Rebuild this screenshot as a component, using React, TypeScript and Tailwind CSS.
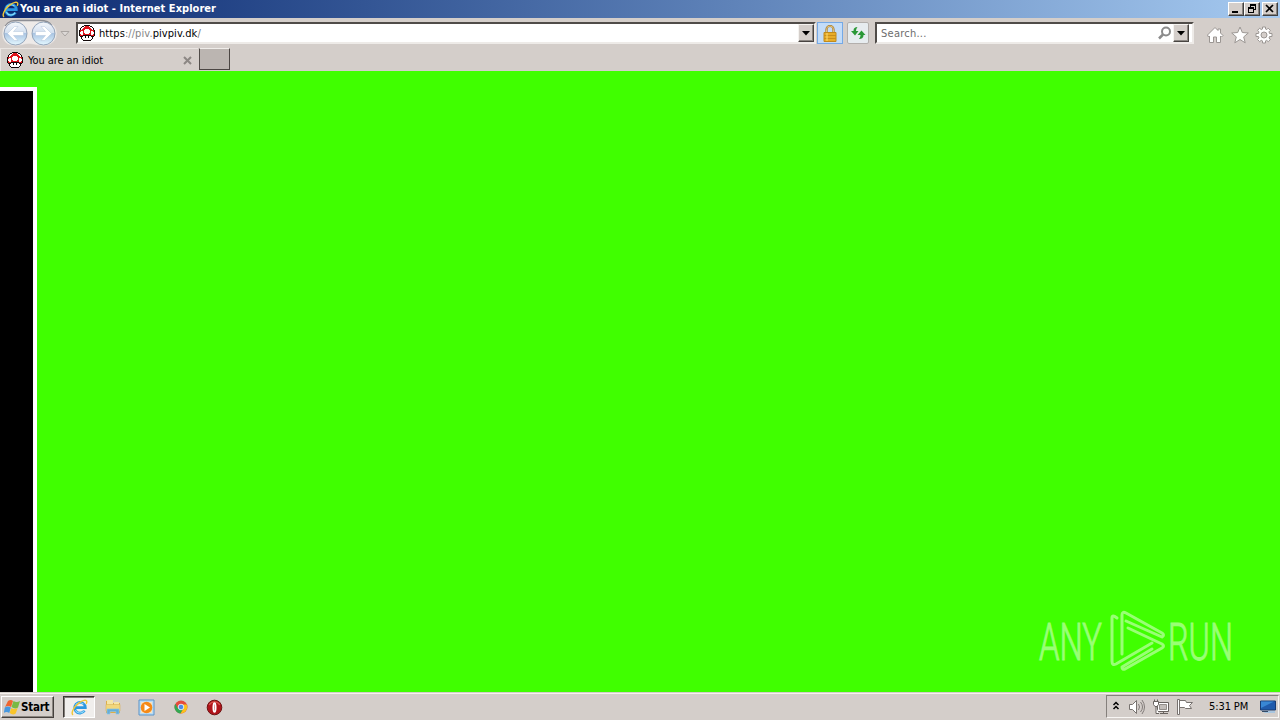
import React from "react";

interface IconProps {
  className?: string;
}

const MUSHROOM = [
  ".....kkkkkk.....",
  "...kkwrrrrwkk...",
  "..kwwrrrrrrwwk..",
  ".kwwrrrrrrrrwwk.",
  ".kwrrrwwwwrrrwk.",
  "krrrrwwwwwwrrrrk",
  "krwwrwwwwwwrwwrk",
  "kwwwrwwwwwwrwwwk",
  "kwwwrrwwwwrrwwwk",
  "krwwrrrrrrrrwwrk",
  "krrrkkkkkkkkrrrk",
  ".kkkwwkwwkwwkkk.",
  "..kwwwkwwkwwwk..",
  "..kwwwwwwwwwwk..",
  "...kwwwwwwwwk...",
  "....kkkkkkkk....",
];

const PIXEL_COLORS: Record<string, string> = {
  k: "#120808",
  r: "#e0141c",
  w: "#ffffff",
};

const MushroomIcon = () => (
  <svg width="16" height="16" viewBox="0 0 16 16" shapeRendering="crispEdges" className="shrink-0">
    {MUSHROOM.map((row, y) =>
      row.split("").map((c, x) =>
        c === "." ? null : (
          <rect key={`${x}-${y}`} x={x} y={y} width="1" height="1" fill={PIXEL_COLORS[c]} />
        )
      )
    )}
  </svg>
);

const ExplorerIcon = ({ className }: IconProps) => (
  <svg viewBox="0 0 18 18" className={className}>
    <path
      d="M14.300 12.300a5.700 5.700 0 1 1 .900-3.200H5"
      fill="none"
      stroke="#2a97e0"
      strokeWidth="2.800"
    />
    <path d="M13.900 12.300a5.300 5.300 0 0 1-9.300-.3M4.600 6.900a5.400 5.400 0 0 1 8.500-1.500" fill="none" stroke="#8edcfa" strokeWidth="1.100" />
    <path
      d="M2.200 16.800C-.5 15 3 8.200 8.200 4.300c4-3 8.200-4 8.500-1.500.1.800-.3 1.700-.7 2.400"
      fill="none"
      stroke="#efc638"
      strokeWidth="1.500"
    />
  </svg>
);

const NavArrows = () => (
  <svg width="60" height="29" viewBox="0 0 60 29" className="shrink-0">
    <defs>
      <linearGradient id="glass" x1="0" y1="0" x2="0" y2="1">
        <stop offset="0" stopColor="#f4f7fb" />
        <stop offset=".47" stopColor="#d3e0f0" />
        <stop offset=".5" stopColor="#a9c4e2" />
        <stop offset="1" stopColor="#e4f8ff" />
      </linearGradient>
    </defs>
    <path
      d="M2 14.500C2 6 8 1.500 15 1.500h28c8 0 14 6 14 13s-6 12.500-14 12.500c-6 0-9-2-14-2s-8 2-14 2C7 27 2 22 2 14.500"
      fill="#eeeae8"
      stroke="#d5d0cd"
      strokeWidth=".7"
    />
    <path d="M5 7C9 1 14 1.500 19 1.500h21c6 0 10 2 12 5" fill="none" stroke="#8d8e94" strokeWidth="1.300" />
    {[15.5, 43.5].map((cx) => (
      <circle key={cx} cx={cx} cy="14.500" r="11.500" fill="url(#glass)" stroke="#93a4ba" />
    ))}
    <g fill="#fff" stroke="#b3c4da" strokeWidth=".5">
      <path d="M7.500 14.500l7-7h3.500l-4.500 5h10v4h-10l4.500 5h-3.500z" />
      <path d="M51.500 14.500l-7-7H41l4.500 5h-10v4h10l-4.500 5h3.500z" />
    </g>
  </svg>
);

const DropButton = () => (
  <div className="flex h-[18px] w-4 shrink-0 items-center justify-center border border-t-[#f5f3f0] border-r-[#484441] border-b-[#484441] border-l-[#f5f3f0] bg-[#d4ceca] shadow-[inset_-1px_-1px_#8c8783]">
    <svg width="8" height="5" viewBox="0 0 8 5">
      <path d="M0 0h8L4 4.500z" fill="#000" />
    </svg>
  </div>
);

const TitleBar = () => (
  <div className="flex h-[18px] items-center bg-linear-to-r from-[#0c2870] to-[#a6caf0] pl-[2px] pr-[2px]">
    <ExplorerIcon className="h-[17px] w-[17px]" />
    <span className="ml-px w-[200px] whitespace-nowrap pt-px font-['DejaVu_Sans_Condensed','DejaVu_Sans',sans-serif] text-[11px] font-bold tracking-[0.04px] text-white">
      You are an idiot - Internet Explorer
    </span>
    <div className="ml-auto flex">
      {["min", "restore", "close"].map((name) => (
        <div
          key={name}
          className={`h-[14px] w-4 border border-t-white border-r-[#404040] border-b-[#404040] border-l-white bg-[#d4ceca] shadow-[inset_-1px_-1px_#87827e] ${
            name === "close" ? "ml-[2px]" : ""
          }`}
        >
          <svg width="14" height="12" viewBox="0 0 14 12" fill="none" stroke="#000" shapeRendering="crispEdges">
            {name === "min" && <path d="M3 9h6" strokeWidth="2" />}
            {name === "restore" && (
              <>
                <path d="M5.500 4V1.500h5v5H9M3.500 4.500h5v5h-5z" />
                <path d="M5 2h6M3 5h6" strokeWidth="2" />
              </>
            )}
            {name === "close" && (
              <path d="M3 2l7 7M10 2L3 9" strokeWidth="1.700" shapeRendering="auto" />
            )}
          </svg>
        </div>
      ))}
    </div>
  </div>
);

const NavBar = () => (
  <div className="flex h-[30px] items-start pt-[1px] font-['DejaVu_Sans_Condensed','DejaVu_Sans',sans-serif] text-[11px]">
    <NavArrows />
    <svg width="10" height="6" viewBox="0 0 10 6" className="mt-3 shrink-0">
      <path d="M1 .500h8L5 5z" fill="#ddd9d7" stroke="#aaa5a2" />
    </svg>
    <div className="ml-[6px] mt-[3px] flex h-[22px] w-[740px] shrink-0 items-center border-2 border-t-[#504c49] border-r-[#eeebe8] border-b-[#eeebe8] border-l-[#504c49] bg-white pl-px">
      <MushroomIcon />
      <span className="ml-1 whitespace-nowrap pt-[2px] tracking-[0.08px] text-black">
        https<span className="text-[#858585]">://piv.</span>pivpiv.dk<span className="text-[#777]">/</span>
      </span>
      <div className="ml-auto">
        <DropButton />
      </div>
    </div>
    <div className="ml-px mt-[3px] flex h-[22px] w-[26px] shrink-0 items-center justify-center border border-[#75a9e6] bg-[#c3dcf8]">
      <svg width="14" height="17" viewBox="0 0 14 17">
        <path d="M3.500 8V4.500a3.500 3.500 0 0 1 7 0V8" fill="none" stroke="#a57a2c" strokeWidth="2.200" />
        <path d="M3.500 8V4.500a3.500 3.500 0 0 1 7 0V8" fill="none" stroke="#f0d491" strokeWidth=".8" />
        <path d="M1 7.500h12v9H1z" fill="#e8ad2a" stroke="#c08a1c" />
        <path d="M1 10.500h12M1 13.500h12" stroke="#c98f1d" />
        <path d="M4 8v8" stroke="#ffdc70" />
      </svg>
    </div>
    <div className="ml-[4px] mt-[3px] flex h-[22px] w-[22px] shrink-0 items-center justify-center rounded-[2px] border border-[#b3afac] bg-[#e7ecef]">
      <svg width="16" height="16" viewBox="0 0 16 16" fill="#2b9837">
        <path d="M7.500 2C5 2 3.500 3 3.500 6H1l4 4.500L8.500 6H6c0-1.500.5-2.500 1.500-4z" />
        <path d="M9 14c2.500 0 4.500-1 4.500-4H15.500l-4-4.500L7.500 10H10.500c0 1.500-.5 2.500-1.500 4z" />
      </svg>
    </div>
    <div className="ml-[6px] mt-[3px] flex h-[22px] w-[319px] shrink-0 items-center border-2 border-t-[#504c49] border-r-[#eeebe8] border-b-[#eeebe8] border-l-[#504c49] bg-white pl-[4px] pr-[3px]">
      <span className="pt-[2px] tracking-[0.25px] text-[#6d6d6d]">Search...</span>
      <svg width="15" height="15" viewBox="0 0 15 15" className="ml-auto mr-px" fill="none" stroke="#8b8b8b" strokeWidth="2">
        <circle cx="9" cy="5.500" r="4" />
        <path d="M6 8.500L2 12.500" strokeWidth="2.500" />
      </svg>
      <DropButton />
    </div>
    <div className="ml-[12px] mt-[7px] flex gap-[6.5px]">
      <svg width="18" height="18" viewBox="0 0 18 18" fill="#fff" stroke="#9b9693">
        <path d="M1.500 9L9 1.500 12 4.500V3h2.500v4l2.500 2.500-1.500 1.500-1-1v6.500h-4V11h-3v5.500h-4V10l-1 1z" />
      </svg>
      <svg width="18" height="18" viewBox="0 0 18 18" fill="#fff" stroke="#9b9693">
        <path d="M9 1l2.300 5.500 6 .5-4.600 3.900 1.500 5.900L9 13.500l-5.200 3.300 1.500-5.900L.7 7l6-.5z" />
      </svg>
      <svg width="18" height="18" viewBox="0 0 18 18" fill="#fff" stroke="#9b9693">
        <path
          fillRule="evenodd"
          d="M7.500 1h3v2l1.300.6 1.400-1.400 2.200 2.200-1.400 1.400.5 1.700H17v3h-2.500l-.5 1.500 1.400 1.500-2.200 2.200-1.500-1.400-1.200.6V17h-3v-2.100l-1.300-.6-1.500 1.400-2.200-2.200L4 12l-.5-1.500H1v-3h2.500L4 5.800 2.500 4.400l2.200-2.200 1.500 1.400L7.500 3zM9 6a3 3 0 1 0 0 6 3 3 0 0 0 0-6z"
        />
      </svg>
    </div>
  </div>
);

const TabBar = () => (
  <div className="flex h-[23px]">
    <div className="flex h-[23px] w-[198px] items-center border-t border-l border-[#e9e5e2] pl-[6px] pr-[6px]">
      <MushroomIcon />
      <span className="ml-[5px] whitespace-nowrap pt-[2px] font-['DejaVu_Sans_Condensed','DejaVu_Sans',sans-serif] text-[11px] tracking-[-0.08px] text-black">
        You are an idiot
      </span>
      <svg width="9" height="9" viewBox="0 0 9 9" className="ml-auto">
        <path d="M1 1l7 7M8 1L1 8" stroke="#8c8784" strokeWidth="2" />
      </svg>
    </div>
    <div className="ml-px h-[22px] w-[31px] border-t border-r border-b border-l border-t-[#f0edea] border-r-[#4b4643] border-b-[#4b4643] border-l-[#504b48] bg-[#bbb5b1]" />
  </div>
);

const Watermark = () => (
  <svg width="200" height="62" viewBox="0 0 200 62" className="absolute right-[42px] bottom-[20px] opacity-60">
    <g className="font-['Roboto',sans-serif] text-[51px] font-light" fill="#d5ffc3" stroke="#d5ffc3" strokeWidth="1">
      <text x="1" y="50" textLength="63" lengthAdjust="spacingAndGlyphs">
        ANY
      </text>
      <text x="130" y="50" textLength="65" lengthAdjust="spacingAndGlyphs">
        RUN
      </text>
    </g>
    <g fill="none" stroke="#d5ffc3" strokeWidth="3" strokeLinejoin="round" strokeLinecap="round">
      <path d="M79 8q-5-4-5 0v43q0 5 4 3l36-21" />
      <path d="M84 44V5q0-4 4-2l36 20q3 2 0 4L88 11" />
      <path d="M90 18l34 16q3 2 0 4L87 59q-3 1-3-2l30-18" />
    </g>
  </svg>
);

const WebPage = () => (
  <main className="relative flex h-[621px] items-end overflow-hidden bg-[#40ff00]">
    <div className="h-[605px] w-[37px] border-t-4 border-r-4 border-white bg-black" />
    <Watermark />
  </main>
);

const FolderIcon = () => (
  <svg width="18" height="18" viewBox="0 0 18 18">
    <path d="M2 3h5l1 2h8v10H2z" fill="#dcae48" />
    <path d="M3 2h6v5H3zM10 4h5v6h-5z" fill="#f5e5a5" />
    <path d="M2 6.500h14V13H2z" fill="#f2d77c" stroke="#d9b457" strokeWidth=".6" />
    <path d="M3 16v-5h12v5h-3v-2.500H6V16z" fill="#65add7" stroke="#8cc4e4" strokeWidth=".7" />
  </svg>
);

const MediaIcon = () => (
  <svg width="17" height="17" viewBox="0 0 17 17">
    <path d="M1 1h15v15H1z" fill="#b9dcf4" stroke="#5b93c8" />
    <path d="M3 3h11v11H3z" fill="#f8e3c0" />
    <circle cx="8.500" cy="8.500" r="5.800" fill="#f58a18" />
    <path d="M6.500 5l5.500 3.500L6.500 12z" fill="#fff" />
  </svg>
);

const ChromeIcon = () => (
  <svg width="14" height="14" viewBox="0 0 14 14">
    <circle cx="7" cy="7" r="6.500" fill="#e54b3d" />
    <path d="M1.300 3.800A6.500 6.500 0 0 0 6.500 13.500L9.500 8.500 7 7 4 8.500z" fill="#32a853" />
    <path d="M6.500 13.500a6.500 6.500 0 0 0 6.200-9H7l2.600 4z" fill="#fbc21b" />
    <circle cx="7" cy="7" r="2.800" fill="#4c8be8" stroke="#fff" strokeWidth=".8" />
  </svg>
);

const OperaIcon = () => (
  <svg width="17" height="17" viewBox="0 0 17 17">
    <circle cx="8.500" cy="8.500" r="7.300" fill="#b0141a" stroke="#6c1212" />
    <path d="M3.200 6a6 6 0 0 1 10.600 0" fill="none" stroke="#d9534c" strokeWidth="1.300" />
    <ellipse cx="8.500" cy="8.500" rx="2" ry="5.300" fill="#fff" />
    <ellipse cx="8.500" cy="8.500" rx=".4" ry="3.500" fill="#d98080" />
  </svg>
);

const Tray = () => (
  <div className="ml-auto flex h-[23px] w-[173px] items-center border border-t-[#85807c] border-r-[#f8f6f4] border-b-[#f8f6f4] border-l-[#85807c] pl-[5px]">
    <svg width="8" height="10" viewBox="0 0 8 10" className="-mt-[2px] shrink-0" fill="none" stroke="#000" strokeWidth="1.500">
      <path d="M1.500 4L4 1.500 6.500 4M1.500 8L4 5.500 6.500 8" />
    </svg>
    <svg width="17" height="16" viewBox="0 0 17 16" className="ml-[9px] shrink-0" fill="none" stroke="#77726f">
      <path d="M.5 5.500h3l4-4v13l-4-4h-3z" fill="#fff" />
      <path d="M9.500 5q2 3 0 6M11.500 3q4 5 0 10M13 1q5 7 0 14" strokeWidth=".9" />
    </svg>
    <svg width="17" height="16" viewBox="0 0 17 16" className="ml-[7px] shrink-0" fill="#fff" stroke="#68635f">
      <path d="M4.500 3.500h11v9h-11z" />
      <path d="M6.500 5.500h7v5h-7z" fill="#c2bdb9" stroke="#938e8a" />
      <path d="M7 14.500h8M10.500 13v1" />
      <path d="M.5 2.500h5v3l-1.500 2H2L.5 5.500zM1.500 .5v2M4.500 .5v2M3 8v6.500h3" />
    </svg>
    <svg width="17" height="16" viewBox="0 0 17 16" className="ml-[7px] shrink-0" fill="#fff" stroke="#77726f">
      <path d="M2.500 1.500h6l1 2h6l-3 3 2 3h-6l-1-1h-5" />
      <path d="M.5 .5h2v15h-2z" />
    </svg>
    <span className="ml-[15px] w-10 shrink-0 whitespace-nowrap pt-[2px] font-['DejaVu_Sans_Condensed','DejaVu_Sans',sans-serif] text-[11px] tracking-[-0.1px]">
      5:31 PM
    </span>
    <svg width="17" height="14" viewBox="0 0 17 14" className="ml-[11px] mt-px shrink-0">
      <path d="M.5 1h15v9H.5z" fill="#205bac" stroke="#193c73" />
      <path d="M1 8V1.500h13z" fill="#3987d4" />
      <path d="M2 11h13v2H5z" fill="#a8c5df" />
      <path d="M2 11h6v1H2z" fill="#354b67" />
    </svg>
  </div>
);

const Taskbar = () => (
  <footer className="flex h-7 items-center border-t border-[#d4ceca] bg-[#d4ceca] pr-px shadow-[inset_0_1px_#f6f2ee]">
    <div className="ml-px mt-px flex h-[22px] w-[53px] items-center border border-t-white border-r-[#45403d] border-b-[#45403d] border-l-white pl-[2px] shadow-[inset_-1px_-1px_#8b8681]">
      <svg width="17" height="16" viewBox="0 0 17 16" className="shrink-0">
        <path d="M4 2q3-2 5 0L7 8Q4 6 1 8z" fill="#ef652f" />
        <path d="M9.500 2q3 2 6.500 0l-2 6.500q-3 2-6.500-.5z" fill="#79b944" />
        <path d="M.8 8.500q3-2 6 0l-1.500 5.500q-3-2-5.500 0z" fill="#4898df" />
        <path d="M7.200 9q3 2 6.500 0l-2 5.500q-3 2-6-.5z" fill="#f9c52b" />
      </svg>
      <span className="pt-[2px] font-['DejaVu_Sans_Condensed','DejaVu_Sans',sans-serif] text-[11.5px] font-bold tracking-[-0.25px]">Start</span>
    </div>
    <div className="ml-[9px] mt-px flex h-[22px] w-8 items-center justify-center border border-t-[#3d3936] border-r-white border-b-white border-l-[#3d3936] bg-[#f0eeec] shadow-[inset_1px_1px_#827d79]">
      <ExplorerIcon className="h-[17px] w-[17px]" />
    </div>
    <div className="ml-[9px] mt-px flex items-center">
      <FolderIcon />
      <div className="ml-4"><MediaIcon /></div>
      <div className="ml-[19px]"><ChromeIcon /></div>
      <div className="ml-[18px]"><OperaIcon /></div>
    </div>
    <Tray />
  </footer>
);

const App = () => {
  return (
    <div className="h-[720px] w-[1280px] overflow-hidden bg-[#d4ceca]">
      <TitleBar />
      <NavBar />
      <TabBar />
      <WebPage />
      <Taskbar />
    </div>
  );
};

export default App;
